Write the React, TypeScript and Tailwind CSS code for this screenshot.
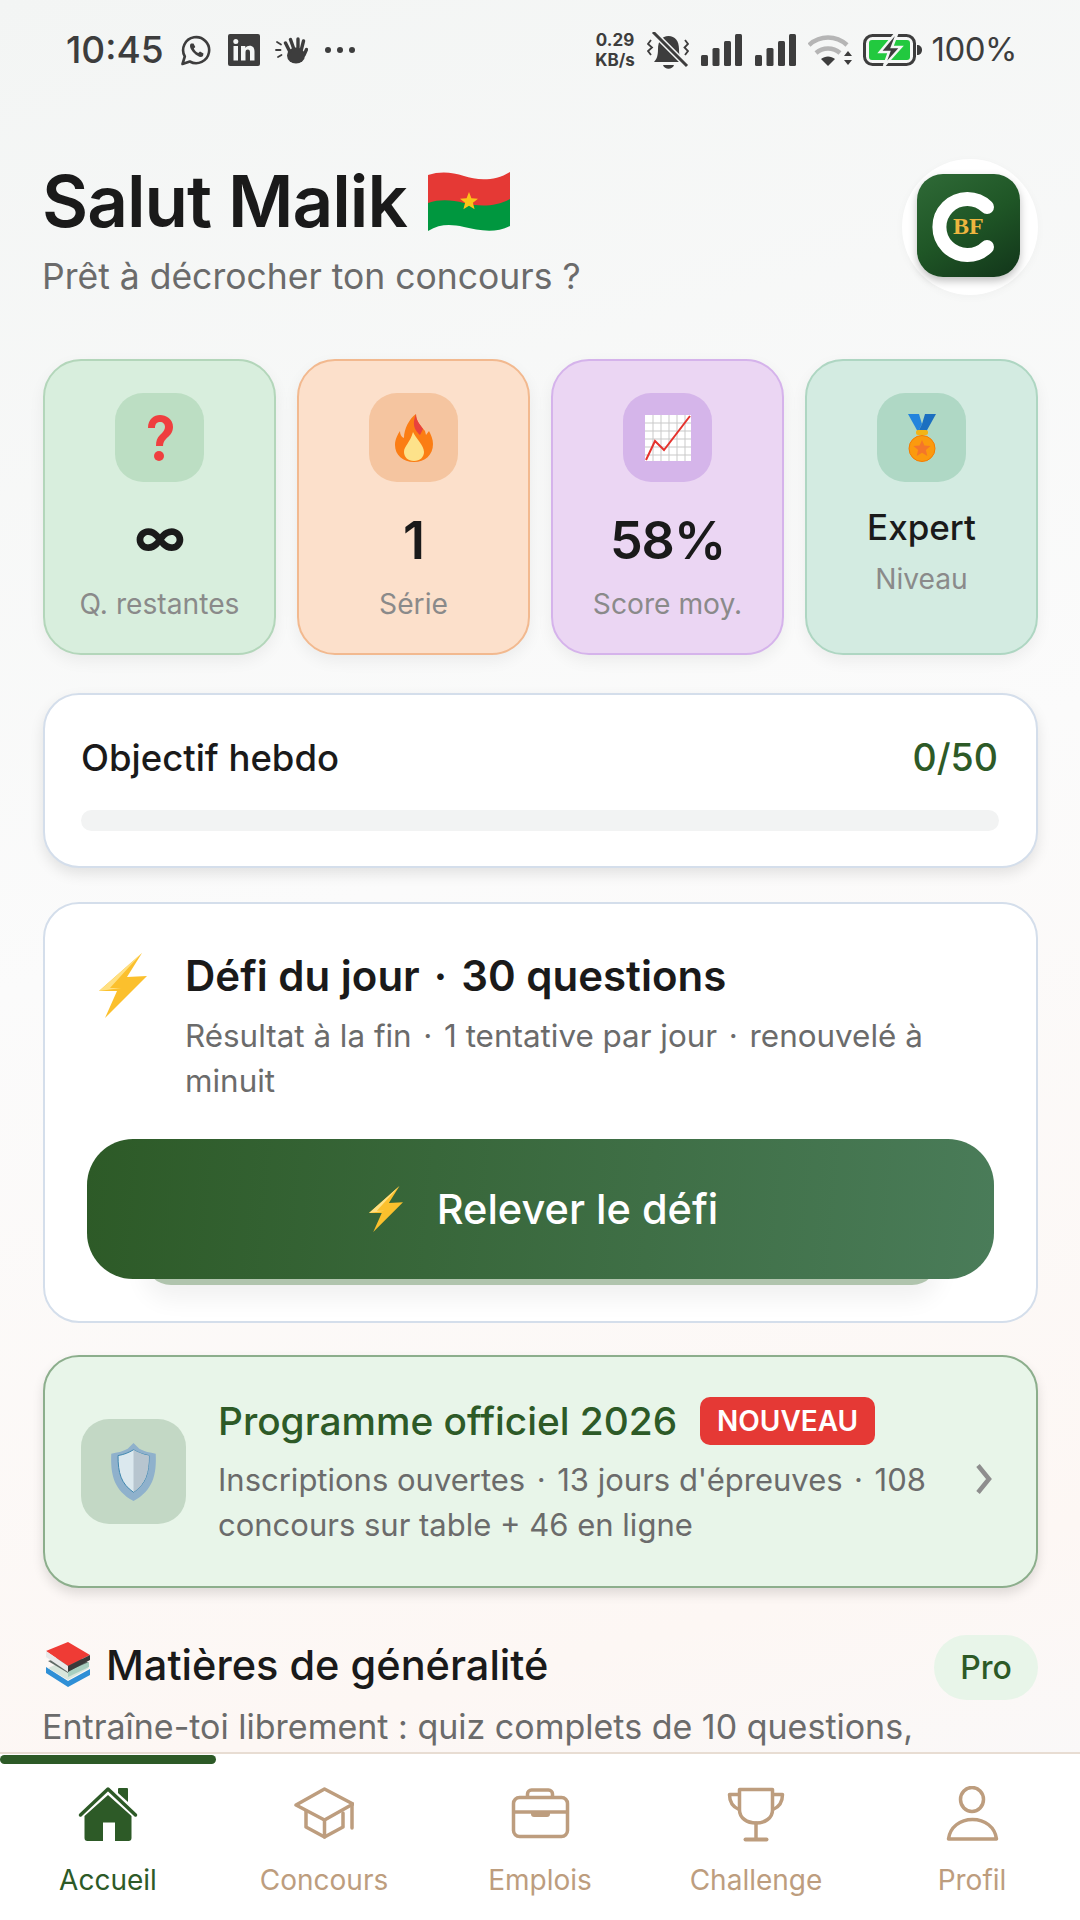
import type { ReactNode } from "react";

const font = "font-['Inter','Noto_Sans',sans-serif]";

function Whatsapp() {
  return (
    <svg viewBox="0 0 32 32" className="h-8 w-8" fill="none" stroke="#3d3d3d" strokeWidth="2.6">
      <path d="M2.500 30l2.300-7.500a13 13 0 1 1 5 5z" strokeLinejoin="round" />
      <path d="M11 9.500c-2.200 2-.5 6 3 9.500s7 5 9 3l.5-2.500-3.500-2-1.700 1.600c-2-1-3.500-2.500-4.500-4.500l1.500-1.600-1.800-3.500z" fill="#3d3d3d" stroke="none" />
    </svg>
  );
}

function Linkedin() {
  return (
    <svg viewBox="0 0 32 32" className="h-8 w-8">
      <rect x="0" y="0" width="32" height="32" rx="2" fill="#3d3d3d" />
      <rect x="5.500" y="12" width="4.500" height="14.500" fill="#f4f6f5" />
      <circle cx="7.800" cy="7.500" r="2.500" fill="#f4f6f5" />
      <path d="M13 12h4.300v2c1-1.500 2.500-2.300 4.300-2.300 3.500 0 4.900 2.300 4.900 5.800v9h-4.500v-8c0-2-.6-3-2.200-3-1.800 0-2.300 1.200-2.300 3.300v7.700H13z" fill="#f4f6f5" />
    </svg>
  );
}

function Hand() {
  return (
    <svg viewBox="0 0 33 27" className="h-[27px] w-[33px]" fill="none" stroke="#3d3d3d" strokeLinecap="round">
      <ellipse cx="21" cy="18.500" rx="9" ry="8" fill="#3d3d3d" stroke="none" />
      <path d="M14.500 14L10.500 6M18.500 11L15.500 2.500M23 11V2M26.500 12L28.500 4M29 18L31.500 12.500" strokeWidth="3.400" />
      <path d="M2 5l4 2.500M1 13h4.500M3 20l3.500-2" strokeWidth="1.800" />
    </svg>
  );
}

function MutedBell() {
  return (
    <svg viewBox="0 0 43 37" className="h-[37px] w-[43px]" fill="none">
      <path d="M7 30c3-3 4-7 4-13 0-8 4-13 10.500-13S32 9 32 17c0 6 1 10 4 13z" fill="#3d3d3d" />
      <path d="M16 33h11c-1.500 5-9.500 5-11 0z" fill="#3d3d3d" />
      <path d="M6 0l34 34" stroke="#f4f6f5" strokeWidth="6" />
      <path d="M6 0l34 34" stroke="#3d3d3d" strokeWidth="3" />
      <path d="M4 8L1 12l4 3.500L1 19l3 4M38 8l3 4-3.500 3.500L41 19l-3 4" stroke="#3d3d3d" strokeWidth="1.800" />
    </svg>
  );
}

function Signal() {
  return (
    <svg viewBox="0 0 41 32" className="h-8 w-[41px]" fill="#3d3d3d">
      <rect x="0" y="21" width="7" height="11" rx="1.500" />
      <rect x="11.500" y="14" width="7" height="18" rx="1.500" />
      <rect x="23" y="7" width="7" height="25" rx="1.500" />
      <rect x="34" y="0" width="7" height="32" rx="1.500" />
    </svg>
  );
}

function Wifi() {
  return (
    <svg viewBox="0 0 44 31" className="h-[31px] w-[44px]" fill="none">
      <path d="M1 10c11-10 27-10 38 0" stroke="#b5b5b5" strokeWidth="4.500" />
      <path d="M8 18c7-6 17-6 24 0" stroke="#b5b5b5" strokeWidth="4.500" />
      <path d="M13 24c4-3.500 10-3.500 14 0l-7 7z" fill="#3d3d3d" />
      <path d="M36 21l4-5 4 5zM36 25l4 5 4-5z" fill="#3d3d3d" />
    </svg>
  );
}

function Battery() {
  return (
    <svg viewBox="0 0 59 32" className="h-8 w-[59px]" fill="none">
      <rect x="1.500" y="1.500" width="50" height="29" rx="8" stroke="#3d3d3d" strokeWidth="3" />
      <rect x="6" y="6" width="41" height="20" rx="3" fill="#22c93f" />
      <path d="M54 11c3 0 5 2 5 5s-2 5-5 5z" fill="#3d3d3d" />
      <path d="M32 0L17 18h9l-5 14 17-19h-9l5-13z" fill="#3d3d3d" stroke="#f4f6f5" strokeWidth="2.500" />
    </svg>
  );
}

function StatusBar() {
  return (
    <div className="flex h-[100px] shrink-0 items-center justify-between pr-[63px] pl-[66px] text-[#3d3d3d]">
      <div className="flex items-center">
        <span className="text-[37px] font-medium">10:45</span>
        <span className="ml-[16px]"><Whatsapp /></span>
        <span className="ml-[16px]"><Linkedin /></span>
        <span className="ml-[15px]"><Hand /></span>
        <span className="ml-[17px] flex gap-[6px]">
          <i className="h-[6px] w-[6px] rounded-full bg-[#3d3d3d]" />
          <i className="h-[6px] w-[6px] rounded-full bg-[#3d3d3d]" />
          <i className="h-[6px] w-[6px] rounded-full bg-[#3d3d3d]" />
        </span>
      </div>
      <div className="flex items-center">
        <div className="flex w-[41px] flex-col items-center text-[17px] leading-[20px] font-bold">
          <span>0.29</span>
          <span>KB/s</span>
        </div>
        <span className="ml-[11px]"><MutedBell /></span>
        <span className="ml-[11px]"><Signal /></span>
        <span className="ml-[13px]"><Signal /></span>
        <span className="ml-[12px]"><Wifi /></span>
        <span className="ml-[11px]"><Battery /></span>
        <span className="ml-[10px] text-[33px] tracking-[-0.5px]">100%</span>
      </div>
    </div>
  );
}

function Flag() {
  return (
    <svg viewBox="0 0 82 59" className="h-[59px] w-[82px]">
      <path d="M0 3c12-4 24-3 36 1s30 6 46-4v30c-16 8-32 5-46 2S12 28 0 32z" fill="#e53935" />
      <path d="M0 31c12-4 24-3 36 0s30 5 46-4v27c-16 8-32 4-46 1S12 52 0 59z" fill="#00973f" />
      <path d="M41 20l2.400 6.300 6.600.4-5.100 4.100 1.700 6.500-5.600-3.600-5.600 3.600 1.700-6.500-5.100-4.100 6.600-.4z" fill="#fcc419" />
    </svg>
  );
}

function Logo() {
  return (
    <div className="flex h-[136px] w-[136px] items-center justify-center rounded-full bg-white shadow-[0_2px_10px_rgba(0,0,0,0.03)]">
      <div className="relative -mt-[3px] -ml-[3px] h-[103px] w-[103px] overflow-hidden rounded-[26px] bg-[linear-gradient(150deg,#2f6a37_0%,#1f5626_50%,#12351a_100%)] shadow-[0_4px_8px_rgba(0,0,0,0.25)]">
        <svg viewBox="0 0 103 103" className="absolute inset-0 h-full w-full" fill="none">
          <path d="M70 33A28 28 0 1 0 70 73" stroke="#fff" strokeWidth="14" strokeLinecap="round" />
        </svg>
        <span className="absolute top-[39px] left-[36px] font-['Liberation_Serif',serif] text-[24px] leading-[26px] font-bold text-[#eeb53f]">BF</span>
      </div>
    </div>
  );
}

function Question() {
  return (
    <svg viewBox="0 0 30 48" className="h-[48px] w-[30px]">
      <path d="M3 14C3 5 9 1 15 1s13 4 13 12c0 6-4 9-7 12-2 2-3 4-3 7h-7c0-5 1-8 4-11s5-5 5-8-2-5-5-5-5 2-5 6z" fill="#ef3f3f" />
      <circle cx="14" cy="42" r="5" fill="#ef3f3f" />
    </svg>
  );
}

function Fire() {
  return (
    <svg viewBox="0 0 38 48" className="h-[48px] w-[38px]">
      <path d="M19 48C8 48 0 41 0 31c0-6 3-11 5-14 0 3 1 6 4 7 0-9 5-19 12-24 0 7 4 11 9 17l1 4 3-4c2 4 4 8 4 13 0 11-8 18-19 18z" fill="#fb7d14" />
      <path d="M21 0c0 7 4 10 7 15l-3 6c-4-4-9-9-4-21z" fill="#e8423d" />
      <path d="M19 47c-6 0-10-4-10-9 0-6 6-9 9-20 3 7 11 13 11 20 0 5-4 9-10 9z" fill="#fde28a" />
    </svg>
  );
}

function Chart() {
  const lines = [8, 16, 24, 32, 40];
  return (
    <svg viewBox="0 0 46 46" className="h-[46px] w-[46px]">
      <rect width="46" height="46" fill="#fff" />
      {lines.map((p) => (
        <g key={p} stroke="#c9c9c9" strokeWidth="1">
          <path d={`M${p} 0v46`} />
          <path d={`M0 ${p}h46`} />
        </g>
      ))}
      <path d="M1 45l9-19 9 9L45 1" fill="none" stroke="#e5322d" strokeWidth="2" />
    </svg>
  );
}

function Medal() {
  return (
    <svg viewBox="0 0 30 48" className="h-[48px] w-[30px]">
      <path d="M1 0h11l3 10-4 8z" fill="#2384dd" />
      <path d="M29 0H18l-3 10-4 8h8z" fill="#1c6fc0" />
      <rect x="9" y="16" width="12" height="5" rx="2" fill="#f2b416" />
      <circle cx="15" cy="34.500" r="13" fill="#fb9a0e" stroke="#f57c00" strokeWidth="1" />
      <path d="M15 26l2.400 5.600 6.100.5-4.600 4 1.400 5.900-5.300-3.200-5.300 3.200 1.400-5.900-4.600-4 6.100-.5z" fill="#f4762a" />
    </svg>
  );
}

function Stat({
  box,
  tile,
  icon,
  value,
  label,
  text,
  heavy,
}: {
  box: string;
  tile: string;
  icon: ReactNode;
  value: string;
  label: string;
  text?: boolean;
  heavy?: boolean;
}) {
  return (
    <div className={`flex h-[296px] flex-col items-center rounded-[38px] border-2 pt-[32px] shadow-[0_6px_16px_rgba(0,0,0,0.06)] ${box}`}>
      <div className={`flex h-[89px] w-[89px] items-center justify-center rounded-[28px] ${tile}`}>{icon}</div>
      {text ? (
        <>
          <div className="mt-[23px] text-[35px] leading-[44px] font-medium text-[#1a1a1a]">{value}</div>
          <div className="mt-[10px] text-[28.200px] leading-[40px] text-[#8a8a8a]">{label}</div>
        </>
      ) : (
        <>
          <div className={`mt-[26px] text-[52px] leading-[66px] tracking-[-1px] text-[#1a1a1a] ${heavy ? "-translate-y-[3px] font-bold" : "font-semibold"}`}>{value}</div>
          <div className="mt-[10px] text-[28.200px] leading-[40px] text-[#8a8a8a]">{label}</div>
        </>
      )}
    </div>
  );
}

function Bolt({ className }: { className: string }) {
  return (
    <svg viewBox="0 0 48 65" className={className}>
      <path d="M43 0L0 38l18 0L6 65l42-42-20 1z" fill="#fbc02d" />
      <path d="M0 38L43 0 30 14 11 35h11z" fill="#ffe082" />
    </svg>
  );
}

function Shield() {
  return (
    <svg viewBox="0 0 50 60" className="h-[58px] w-[49px]">
      <path d="M25 0l6 6c5 3 11 4 17 5 1 22-3 38-23 49C5 49 1 33 2 11c6-1 12-2 17-5z" fill="#8fb1cc" />
      <path d="M25 7c5 3 10 5 16 6 0 18-3 29-16 38C12 42 9 31 9 13c6-1 11-3 16-6z" fill="#dbe8ee" stroke="#3b85ad" strokeWidth="1" />
      <path d="M25 7c5 3 10 5 16 6 0 18-3 29-16 38z" fill="#b7c5cf" />
    </svg>
  );
}

function Books() {
  return (
    <svg viewBox="0 0 46 46" className="h-[46px] w-[46px]">
      <path d="M1 31l22 14 22-12v-6L23 39 1 25z" fill="#2f8fd6" />
      <path d="M3 26l20 12 21-12-20-9z" fill="#d8e6dc" />
      <path d="M3 19l20 12 21-10-18-9z" fill="#5f6a66" />
      <path d="M23 29l21-9v5l-21 10z" fill="#a8cfc0" />
      <path d="M1 9L23 0l22 13-22 11z" fill="#ef3b35" />
      <path d="M1 9l22 15v6L1 15z" fill="#e9e9e9" />
      <path d="M23 24l22-11v5L23 30z" fill="#3a3a3a" />
    </svg>
  );
}

function HomeIcon() {
  return (
    <svg viewBox="0 0 60 56" className="h-[56px] w-[60px]" fill="none">
      <path d="M30 9L53.500 30v22q0 3-3 3H37V36.500H25V55H9.500q-3 0-3-3V30z" fill="#2d5a27" />
      <path d="M2.500 29L30 3l27.500 26" stroke="#2d5a27" strokeWidth="3.500" strokeLinecap="round" strokeLinejoin="round" />
      <path d="M40 3q0-1 1-1h8q1 0 1 1v13l-10-9z" fill="#2d5a27" />
    </svg>
  );
}

function CapIcon() {
  return (
    <svg viewBox="0 0 60 56" className="h-[56px] w-[60px]" fill="none" stroke="#bd9d7e" strokeWidth="3.500" strokeLinejoin="round" strokeLinecap="round">
      <path d="M2 19L30.500 3 59 18 30.500 34z" />
      <path d="M12 25v16l18.500 10L49 41V27" />
      <path d="M30.500 34v17" />
      <path d="M58 18v24" />
    </svg>
  );
}

function CaseIcon() {
  return (
    <svg viewBox="0 0 60 56" className="h-[56px] w-[60px]" fill="none" stroke="#bd9d7e" strokeWidth="3.500">
      <rect x="3.500" y="11.500" width="54" height="39" rx="6" />
      <path d="M17.500 11V8a4 4 0 0 1 4-4h17a4 4 0 0 1 4 4v3" />
      <path d="M3.500 26h54" />
      <path d="M21 26h19v2q0 3-3 3H24q-3 0-3-3z" fill="#bd9d7e" stroke="none" />
    </svg>
  );
}

function CupIcon() {
  return (
    <svg viewBox="0 0 60 56" className="h-[56px] w-[60px]" fill="none" stroke="#bd9d7e" strokeWidth="3.500" strokeLinecap="round" strokeLinejoin="round">
      <path d="M13.500 3.500h33V24c0 8-7.500 13-16.500 13s-16.500-5-16.500-13z" />
      <path d="M13 8.500H3.500C3.500 16 7 21 13 23.500M47 8.500h9.500C56.500 16 53 21 47 23.500" />
      <path d="M30 37v16" />
      <path d="M19.500 53.500h21" strokeWidth="4" />
    </svg>
  );
}

function UserIcon() {
  return (
    <svg viewBox="0 0 60 56" className="h-[56px] w-[60px]" fill="none" stroke="#bd9d7e" strokeWidth="3.500" strokeLinejoin="round">
      <ellipse cx="30" cy="13.500" rx="11.500" ry="12" />
      <path d="M6.500 53C8 41 18 33.500 30.500 33.500S53 41 54.500 53z" />
    </svg>
  );
}

function NavItem({ icon, label, active }: { icon: ReactNode; label: string; active?: boolean }) {
  return (
    <div className="flex w-[216px] flex-col items-center">
      <div className="flex h-[56px] items-center justify-center">{icon}</div>
      <span className={`mt-[20px] text-[28px] leading-[36px] ${active ? "text-[#2d5a27]" : "text-[#bd9d7e]"}`}>{label}</span>
    </div>
  );
}

export default function App() {
  return (
    <div className={`${font} relative flex h-[1920px] w-[1080px] flex-col overflow-hidden bg-[linear-gradient(165deg,#f3f5f4_0%,#fbfbfb_45%,#fdf7f4_82%,#f8f9fb_100%)]`}>
      <StatusBar />

      <div className="min-h-0 flex-1 overflow-hidden pr-[42px] pl-[43px]">
        <div className="mt-[59px] flex items-start justify-between">
          <div className="-ml-[1px]">
            <div className="flex items-center gap-[21px]">
              <h1 className="text-[71px] leading-[84px] font-semibold tracking-[-1px] text-[#1a1a1a]">Salut Malik</h1>
              <Flag />
            </div>
            <p className="mt-[11px] text-[35.500px] leading-[46px] text-[#6b6b6b]">Prêt à décrocher ton concours ?</p>
          </div>
          <Logo />
        </div>

        <div className="mt-[59px] grid grid-cols-4 gap-[21px]">
          <Stat box="border-[#b3d6ba] bg-[#d8eedd]" tile="bg-[#bcdec3]" icon={<Question />} value="∞" label="Q. restantes" heavy />
          <Stat box="border-[#f2b98f] bg-[#fce0cb]" tile="bg-[#f5c5a0]" icon={<Fire />} value="1" label="Série" />
          <Stat box="border-[#d5b3eb] bg-[#ebd6f3]" tile="bg-[#d5b5ea]" icon={<Chart />} value="58%" label="Score moy." />
          <Stat box="border-[#aed6c2] bg-[#d3ebe1]" tile="bg-[#afd8c5]" icon={<Medal />} value="Expert" label="Niveau" text />
        </div>

        <div className="mt-[38px] h-[175px] rounded-[36px] border-2 border-[#d4deeb] bg-white pt-[41px] pr-[37px] pl-[36px] shadow-[0_6px_14px_rgba(0,0,0,0.1)]">
          <div className="flex items-center justify-between">
            <span className="text-[36.500px] leading-[44px] font-medium text-[#1a1a1a]">Objectif hebdo</span>
            <span className="mr-[1px] text-[37.500px] leading-[44px] font-medium text-[#2d5a27]">0/50</span>
          </div>
          <div className="mt-[30px] h-[21px] rounded-full bg-[#f2f3f3]" />
        </div>

        <div className="mt-[34px] h-[421px] rounded-[36px] border-2 border-[#d4deeb] bg-white px-[42px] pt-[48px]">
          <div className="flex items-start">
            <Bolt className="mt-[1px] ml-[12px] h-[65px] w-[48px] shrink-0" />
            <div className="ml-[38px]">
              <div className="text-[42px] leading-[48px] font-semibold text-[#1a1a1a]">
                {"Défi du jour \u200A·\u200A 30 questions"}
              </div>
              <div className="mt-[14px] text-[31.400px] leading-[45px] text-[#6b6b6b]">
                {"Résultat à la fin \u200A·\u200A 1 tentative par jour \u200A·\u200A renouvelé à minuit"}
              </div>
            </div>
          </div>
          <div className="relative mt-[35px]">
            <div className="absolute right-[56px] -bottom-[6px] left-[58px] h-[40px] rounded-b-[26px] bg-[#b0c4ad] shadow-[0_14px_24px_rgba(0,0,0,0.06)]" />
            <div className="relative flex h-[140px] items-center justify-center rounded-[46px] bg-[linear-gradient(95deg,#2d5a27,#4a7c59)] pl-[4px]">
              <Bolt className="h-[46px] w-[38px]" />
              <span className="ml-[32px] text-[41.500px] font-medium text-white">Relever le défi</span>
            </div>
          </div>
        </div>

        <div className="mt-[32px] flex h-[233px] items-center rounded-[36px] border-2 border-[#8cae8c] bg-[#e8f5e9] pr-[43px] pl-[36px] shadow-[0_6px_12px_rgba(0,0,0,0.12)]">
          <div className="flex h-[105px] w-[105px] shrink-0 items-center justify-center rounded-[28px] bg-[#c3d8c5]">
            <Shield />
          </div>
          <div className="ml-[32px] min-w-0 flex-1">
            <div className="flex items-center">
              <span className="text-[38.800px] leading-[50px] font-medium text-[#2d5a27]">Programme officiel 2026</span>
              <span className="ml-[23px] flex h-[48px] w-[175px] items-center justify-center rounded-[10px] bg-[#e53935] text-[28px] font-semibold text-white">NOUVEAU</span>
            </div>
            <div className="mt-[11px] text-[31px] leading-[45px] text-[#6b6b6b]">
              {"Inscriptions ouvertes \u200A·\u200A 13 jours d'épreuves \u200A·\u200A 108 concours sur table + 46 en ligne"}
            </div>
          </div>
          <svg viewBox="0 0 18 30" className="mt-[14px] ml-[24px] h-[30px] w-[18px] shrink-0" fill="none" stroke="#8e8e8e" strokeWidth="4.500">
            <path d="M3 1.500l11 13.500L3 28.500" />
          </svg>
        </div>

        <div className="mt-[47px] flex items-start justify-between">
          <div className="flex items-center pt-[3px]">
            <span className="ml-[2px]"><Books /></span>
            <span className="ml-[15px] text-[41.500px] leading-[54px] font-medium text-[#1a1a1a]">Matières de généralité</span>
          </div>
          <div className="flex h-[65px] w-[104px] items-center justify-center rounded-full bg-[#e8f5e9] text-[32px] font-medium text-[#2d5a27]">Pro</div>
        </div>
        <p className="mt-[5px] -ml-[1px] text-[34px] leading-[44px] text-[#6b6b6b]">Entraîne-toi librement : quiz complets de 10 questions,</p>
      </div>

      <nav className="relative h-[168px] shrink-0 border-t-2 border-[#e8ddd3] bg-white pt-[32px]">
        <div className="absolute top-[1px] left-0 h-[9px] w-[216px] rounded-full bg-[#2d5a27]" />
        <div className="flex">
          <NavItem icon={<HomeIcon />} label="Accueil" active />
          <NavItem icon={<CapIcon />} label="Concours" />
          <NavItem icon={<CaseIcon />} label="Emplois" />
          <NavItem icon={<CupIcon />} label="Challenge" />
          <NavItem icon={<UserIcon />} label="Profil" />
        </div>
      </nav>
    </div>
  );
}
